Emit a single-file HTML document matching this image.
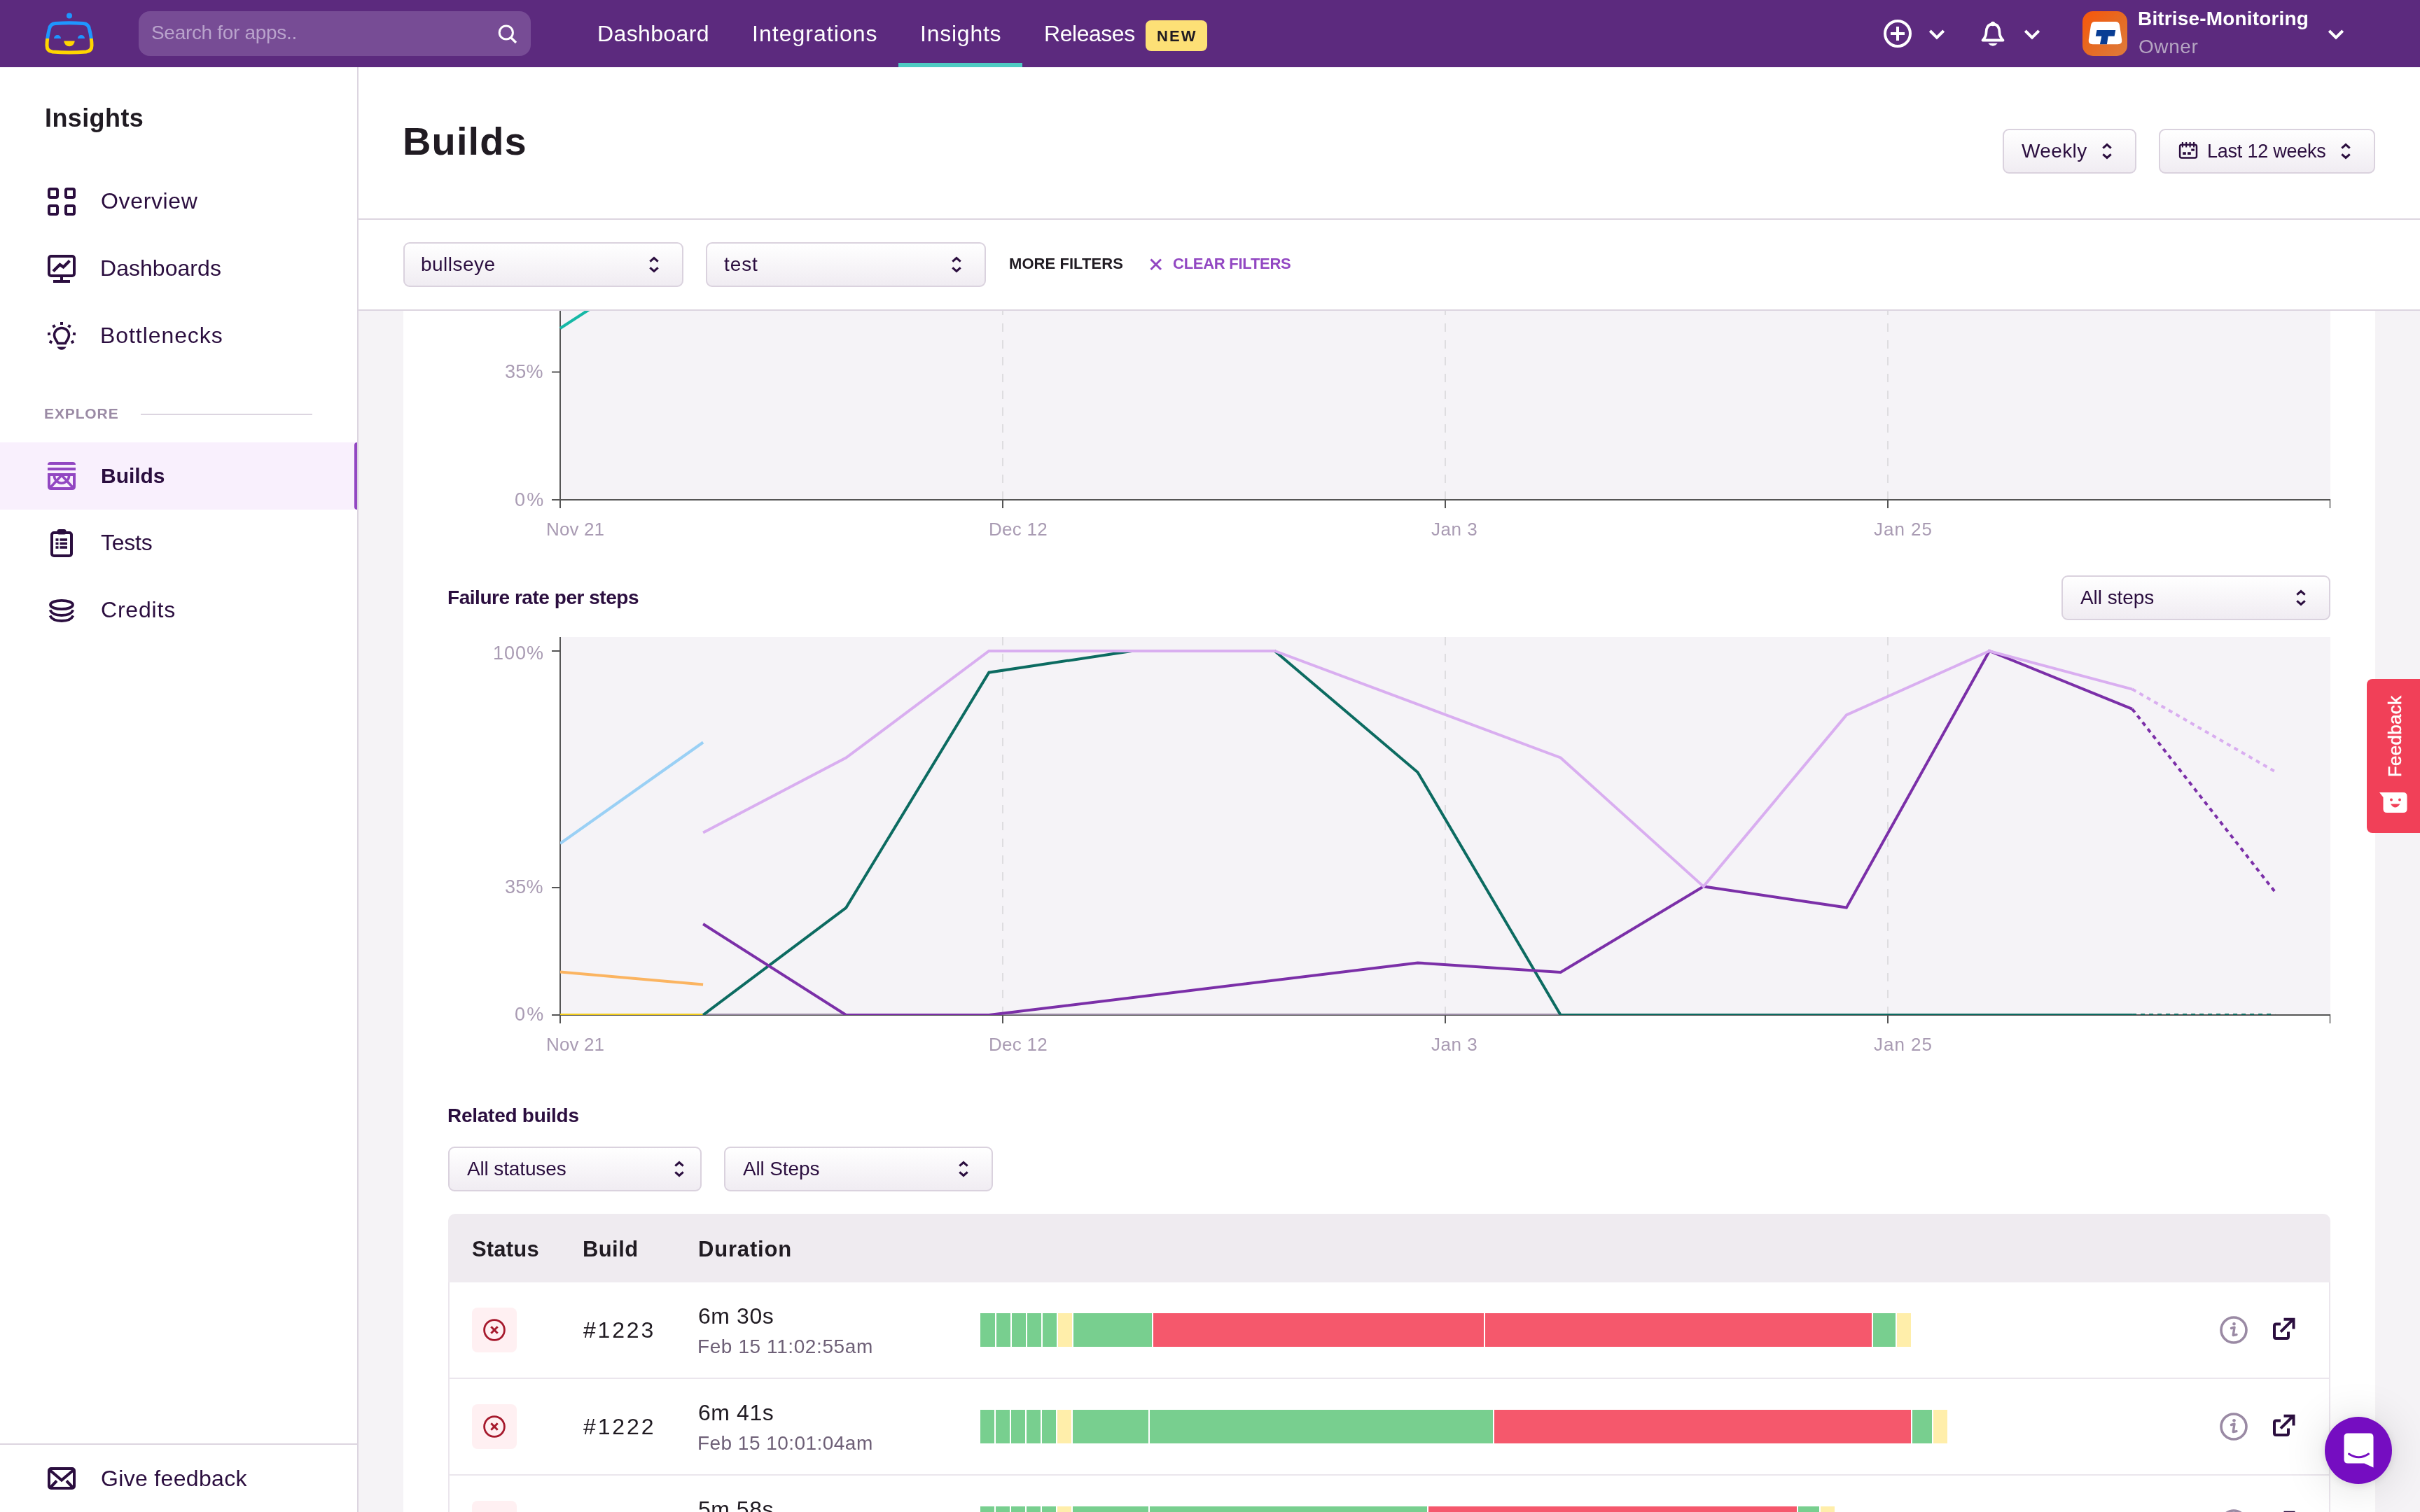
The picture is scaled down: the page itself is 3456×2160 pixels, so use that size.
<!DOCTYPE html>
<html><head><meta charset="utf-8"><title>Builds - Insights</title><style>
html,body{margin:0;padding:0;}
@media (max-width:1800px){html{zoom:.5;}}
body{width:3456px;height:2160px;overflow:hidden;position:relative;background:#f5f3f6;font-family:"Liberation Sans",sans-serif;}
.b{position:absolute;display:block;}
.t{position:absolute;display:block;white-space:nowrap;line-height:1;will-change:transform;}
</style></head><body>
<div class="b" style="left:512px;top:444px;width:2944px;height:1716px;background:#f5f3f6;"></div>
<div class="b" style="left:576px;top:444px;width:2816px;height:1716px;background:#fff;"></div>
<div class="b" style="left:800px;top:444px;width:2528px;height:270px;background:#f5f3f7;"></div>
<div class="b" style="left:800px;top:910px;width:2528px;height:540px;background:#f5f3f7;"></div>
<svg class="b" style="left:576px;top:300px;" width="2816" height="1220" viewBox="0 0 2816 1220" ><line x1="856.0" y1="414.0" x2="856.0" y2="144.0" stroke="#dedde0" stroke-width="2" stroke-dasharray="12 12"/><line x1="1488.0" y1="414.0" x2="1488.0" y2="144.0" stroke="#dedde0" stroke-width="2" stroke-dasharray="12 12"/><line x1="2120.0" y1="414.0" x2="2120.0" y2="144.0" stroke="#dedde0" stroke-width="2" stroke-dasharray="12 12"/><line x1="856.0" y1="1150.0" x2="856.0" y2="610.0" stroke="#dedde0" stroke-width="2" stroke-dasharray="12 12"/><line x1="1488.0" y1="1150.0" x2="1488.0" y2="610.0" stroke="#dedde0" stroke-width="2" stroke-dasharray="12 12"/><line x1="2120.0" y1="1150.0" x2="2120.0" y2="610.0" stroke="#dedde0" stroke-width="2" stroke-dasharray="12 12"/><line x1="224.0" y1="144.0" x2="224.0" y2="426.0" stroke="#555555" stroke-width="2" /><line x1="212.0" y1="414.0" x2="2752.0" y2="414.0" stroke="#555555" stroke-width="2" /><line x1="2751.5" y1="413.0" x2="2751.5" y2="426.0" stroke="#555555" stroke-width="1.4" /><line x1="856.0" y1="414.0" x2="856.0" y2="426.0" stroke="#555555" stroke-width="2" /><line x1="1488.0" y1="414.0" x2="1488.0" y2="426.0" stroke="#555555" stroke-width="2" /><line x1="2120.0" y1="414.0" x2="2120.0" y2="426.0" stroke="#555555" stroke-width="2" /><line x1="212.0" y1="231.5" x2="224.0" y2="231.5" stroke="#555555" stroke-width="2" /><line x1="212.0" y1="414.0" x2="224.0" y2="414.0" stroke="#555555" stroke-width="2" /><line x1="224.0" y1="610.0" x2="224.0" y2="1162.0" stroke="#555555" stroke-width="2" /><line x1="212.0" y1="1150.0" x2="2752.0" y2="1150.0" stroke="#555555" stroke-width="2" /><line x1="2751.5" y1="1149.0" x2="2751.5" y2="1162.0" stroke="#555555" stroke-width="1.4" /><line x1="856.0" y1="1150.0" x2="856.0" y2="1162.0" stroke="#555555" stroke-width="2" /><line x1="1488.0" y1="1150.0" x2="1488.0" y2="1162.0" stroke="#555555" stroke-width="2" /><line x1="2120.0" y1="1150.0" x2="2120.0" y2="1162.0" stroke="#555555" stroke-width="2" /><line x1="212.0" y1="630.0" x2="224.0" y2="630.0" stroke="#555555" stroke-width="2" /><line x1="212.0" y1="968.0" x2="224.0" y2="968.0" stroke="#555555" stroke-width="2" /><line x1="212.0" y1="1150.0" x2="224.0" y2="1150.0" stroke="#555555" stroke-width="2" /><polyline points="224.0,169.0 428.0,37.0" fill="none" stroke="#16b8a6" stroke-width="4" stroke-linejoin="miter" /><defs><clipPath id="cp2"><rect x="224" y="600" width="2528" height="550"/></clipPath></defs><g clip-path="url(#cp2)"><polyline points="428.1,1150.0 2469.1,1150.0" fill="none" stroke="#9b8ca6" stroke-width="4" stroke-linejoin="miter" /><polyline points="224.0,1150.0 428.1,1150.0" fill="none" stroke="#f2cc1c" stroke-width="4" stroke-linejoin="miter" /><polyline points="224.0,1088.6 428.1,1106.4" fill="none" stroke="#fbb461" stroke-width="4" stroke-linejoin="miter" /><polyline points="224.0,905.0 428.1,760.5" fill="none" stroke="#9ad0f5" stroke-width="4" stroke-linejoin="miter" /><polyline points="428.1,1150.0 632.2,996.8 836.3,660.7 1040.4,630.0 1244.5,630.0 1448.6,803.2 1652.7,1150.0 2469.1,1150.0" fill="none" stroke="#0c6b61" stroke-width="4" stroke-linejoin="miter" /><polyline points="2469.1,1150.0 2673.2,1150.0" fill="none" stroke="#0c6b61" stroke-width="4" stroke-linejoin="miter" stroke-dasharray="6 6"/><polyline points="428.1,1020.0 632.2,1150.0 836.3,1150.0 1448.6,1075.4 1652.7,1089.0 1856.8,966.4 2060.9,996.6 2265.0,630.0 2469.1,712.9" fill="none" stroke="#7b2fa8" stroke-width="4" stroke-linejoin="miter" /><polyline points="2469.1,712.9 2672.2,973.2" fill="none" stroke="#7b2fa8" stroke-width="4" stroke-linejoin="miter" stroke-dasharray="6 6"/><polyline points="428.1,889.6 632.2,782.6 836.3,630.0 1040.4,630.0 1244.5,630.0 1448.6,706.2 1652.7,782.5 1856.8,966.4 2060.9,721.4 2265.0,630.0 2469.1,684.6" fill="none" stroke="#d9aef0" stroke-width="4" stroke-linejoin="miter" /><polyline points="2469.1,684.6 2672.2,801.8" fill="none" stroke="#d9aef0" stroke-width="4" stroke-linejoin="miter" stroke-dasharray="6 6"/></g></svg>
<span id="c1y35" class="t" style="left:721.4px;top:518.3px;font-size:27px;font-weight:400;color:#a99bb3;letter-spacing:0.27px;">35%</span>
<span id="c1y0" class="t" style="left:734.8px;top:700.6px;font-size:27px;font-weight:400;color:#a99bb3;letter-spacing:2.19px;">0%</span>
<span id="c2y100" class="t" style="left:703.9px;top:920.1px;font-size:27px;font-weight:400;color:#a99bb3;letter-spacing:0.99px;">100%</span>
<span id="c2y35" class="t" style="left:721.4px;top:1253.9px;font-size:27px;font-weight:400;color:#a99bb3;letter-spacing:0.27px;">35%</span>
<span id="c2y0" class="t" style="left:734.8px;top:1435.9px;font-size:27px;font-weight:400;color:#a99bb3;letter-spacing:2.19px;">0%</span>
<span id="c0x0" class="t" style="left:780.2px;top:743.0px;font-size:26px;font-weight:400;color:#a99bb3;letter-spacing:0.12px;">Nov 21</span>
<span id="c0x1" class="t" style="left:1411.9px;top:743.0px;font-size:26px;font-weight:400;color:#a99bb3;letter-spacing:0.29px;">Dec 12</span>
<span id="c0x2" class="t" style="left:2044.4px;top:743.0px;font-size:26px;font-weight:400;color:#a99bb3;letter-spacing:0.53px;">Jan 3</span>
<span id="c0x3" class="t" style="left:2675.9px;top:743.0px;font-size:26px;font-weight:400;color:#a99bb3;letter-spacing:0.96px;">Jan 25</span>
<span id="c1x0" class="t" style="left:780.2px;top:1479.3px;font-size:26px;font-weight:400;color:#a99bb3;letter-spacing:0.12px;">Nov 21</span>
<span id="c1x1" class="t" style="left:1411.9px;top:1479.3px;font-size:26px;font-weight:400;color:#a99bb3;letter-spacing:0.29px;">Dec 12</span>
<span id="c1x2" class="t" style="left:2044.4px;top:1479.3px;font-size:26px;font-weight:400;color:#a99bb3;letter-spacing:0.53px;">Jan 3</span>
<span id="c1x3" class="t" style="left:2675.9px;top:1479.3px;font-size:26px;font-weight:400;color:#a99bb3;letter-spacing:0.96px;">Jan 25</span>
<span id="frps" class="t" style="left:639.1px;top:839.5px;font-size:28px;font-weight:700;color:#2b0e3f;letter-spacing:-0.46px;">Failure rate per steps</span>
<div class="b" style="left:2944px;top:822px;width:380px;height:60px;border:2px solid #dad2de;border-radius:9px;background:linear-gradient(#ffffff,#f0ecf2);"></div><span id="allsteps" class="t" style="left:2970.5px;top:840.1px;font-size:28px;font-weight:400;color:#2b0e3f;letter-spacing:-0.06px;">All steps</span><svg class="b" style="left:3274px;top:838.0px;" width="24" height="32" viewBox="0 0 24 32" ><path d="M6.3 11.6 L12 6.6 L17.700 11.6 M6.3 20.4 L12 25.4 L17.700 20.4" fill="none" stroke="#2b0e3f" stroke-width="3.1" stroke-linecap="butt" stroke-linejoin="miter"/></svg>
<span id="relb" class="t" style="left:639.1px;top:1579.5px;font-size:28px;font-weight:700;color:#2b0e3f;letter-spacing:-0.26px;">Related builds</span>
<div class="b" style="left:640px;top:1638px;width:358px;height:60px;border:2px solid #dad2de;border-radius:9px;background:linear-gradient(#ffffff,#f0ecf2);"></div><span id="allstat" class="t" style="left:666.6px;top:1656.1px;font-size:28px;font-weight:400;color:#2b0e3f;letter-spacing:-0.14px;">All statuses</span><svg class="b" style="left:958px;top:1654.0px;" width="24" height="32" viewBox="0 0 24 32" ><path d="M6.3 11.6 L12 6.6 L17.700 11.6 M6.3 20.4 L12 25.4 L17.700 20.4" fill="none" stroke="#2b0e3f" stroke-width="3.1" stroke-linecap="butt" stroke-linejoin="miter"/></svg>
<div class="b" style="left:1034px;top:1638px;width:380px;height:60px;border:2px solid #dad2de;border-radius:9px;background:linear-gradient(#ffffff,#f0ecf2);"></div><span id="allSteps2" class="t" style="left:1060.5px;top:1656.1px;font-size:28px;font-weight:400;color:#2b0e3f;letter-spacing:-0.14px;">All Steps</span><svg class="b" style="left:1364px;top:1654.0px;" width="24" height="32" viewBox="0 0 24 32" ><path d="M6.3 11.6 L12 6.6 L17.700 11.6 M6.3 20.4 L12 25.4 L17.700 20.4" fill="none" stroke="#2b0e3f" stroke-width="3.1" stroke-linecap="butt" stroke-linejoin="miter"/></svg>
<div class="b" style="left:640px;top:1734px;width:2688px;height:98px;background:#efebf0;border-radius:10px 10px 0 0;"></div>
<div class="b" style="left:640px;top:1832px;width:2px;height:328px;background:#ebe6ed;"></div>
<div class="b" style="left:3326px;top:1832px;width:2px;height:328px;background:#ebe6ed;"></div>
<div class="b" style="left:640px;top:1968px;width:2688px;height:2px;background:#ebe6ed;"></div>
<div class="b" style="left:640px;top:2106px;width:2688px;height:2px;background:#ebe6ed;"></div>
<span id="thS" class="t" style="left:673.5px;top:1768.8px;font-size:31px;font-weight:700;color:#201b22;letter-spacing:0.18px;">Status</span>
<span id="thB" class="t" style="left:831.9px;top:1768.8px;font-size:31px;font-weight:700;color:#201b22;letter-spacing:0.40px;">Build</span>
<span id="thD" class="t" style="left:996.6px;top:1768.8px;font-size:31px;font-weight:700;color:#201b22;letter-spacing:0.82px;">Duration</span>
<div class="b" style="left:674px;top:1868px;width:64px;height:64px;background:#fff0f2;border-radius:8px;"></div>
<svg class="b" style="left:686px;top:1880px;" width="40" height="40" viewBox="0 0 40 40" ><circle cx="20" cy="20" r="14.4" fill="none" stroke="#a61a2d" stroke-width="2.8"/><path d="M15.300 15.300 L24.700 24.700 M24.700 15.300 L15.300 24.700" stroke="#a61a2d" stroke-width="3" fill="none"/></svg>
<span id="r0n" class="t" style="left:832.9px;top:1883.9px;font-size:32px;font-weight:400;color:#201b22;letter-spacing:2.82px;">#1223</span>
<span id="r0d" class="t" style="left:997.1px;top:1864.3px;font-size:32px;font-weight:400;color:#201b22;letter-spacing:0.57px;">6m 30s</span>
<span id="r0t" class="t" style="left:996.4px;top:1909.9px;font-size:28px;font-weight:400;color:#6e6077;letter-spacing:0.59px;">Feb 15 11:02:55am</span>
<div class="b" style="left:1400px;top:1876px;width:21px;height:48px;background:#78cf8f;"></div>
<div class="b" style="left:1423px;top:1876px;width:20px;height:48px;background:#78cf8f;"></div>
<div class="b" style="left:1445px;top:1876px;width:20px;height:48px;background:#78cf8f;"></div>
<div class="b" style="left:1467px;top:1876px;width:20px;height:48px;background:#78cf8f;"></div>
<div class="b" style="left:1489px;top:1876px;width:20px;height:48px;background:#78cf8f;"></div>
<div class="b" style="left:1511px;top:1876px;width:20px;height:48px;background:#ffeeaa;"></div>
<div class="b" style="left:1533px;top:1876px;width:112px;height:48px;background:#78cf8f;"></div>
<div class="b" style="left:1647px;top:1876px;width:472px;height:48px;background:#f5586c;"></div>
<div class="b" style="left:2121px;top:1876px;width:552px;height:48px;background:#f5586c;"></div>
<div class="b" style="left:2675px;top:1876px;width:32px;height:48px;background:#78cf8f;"></div>
<div class="b" style="left:2709px;top:1876px;width:20px;height:48px;background:#ffeeaa;"></div>
<svg class="b" style="left:3170px;top:1880px;" width="40" height="40" viewBox="0 0 40 40" ><circle cx="20" cy="20" r="18" fill="none" stroke="#9a8aa4" stroke-width="3.6"/><circle cx="20.5" cy="11.3" r="2.3" fill="#9a8aa4"/><path d="M16.5 17.5 L21 16.2 L19.2 27.6 L24 26.6" fill="none" stroke="#9a8aa4" stroke-width="3.4" stroke-linejoin="round" stroke-linecap="round"/></svg>
<svg class="b" style="left:3242px;top:1878px;" width="40" height="40" viewBox="0 0 40 40" ><path d="M15 13.500 H8.5 Q6 13.500 6 16 V31.5 Q6 34 8.5 34 H23.5 Q26 34 26 31.5 V24.500" fill="none" stroke="#2b0e3f" stroke-width="4"/><path d="M15 24.700 L32.5 7.200 M19.500 6.700 H33.500 V20.500" fill="none" stroke="#2b0e3f" stroke-width="4"/></svg>
<div class="b" style="left:674px;top:2006px;width:64px;height:64px;background:#fff0f2;border-radius:8px;"></div>
<svg class="b" style="left:686px;top:2018px;" width="40" height="40" viewBox="0 0 40 40" ><circle cx="20" cy="20" r="14.4" fill="none" stroke="#a61a2d" stroke-width="2.8"/><path d="M15.300 15.300 L24.700 24.700 M24.700 15.300 L15.300 24.700" stroke="#a61a2d" stroke-width="3" fill="none"/></svg>
<span id="r1n" class="t" style="left:832.9px;top:2021.9px;font-size:32px;font-weight:400;color:#201b22;letter-spacing:2.87px;">#1222</span>
<span id="r1d" class="t" style="left:997.1px;top:2002.3px;font-size:32px;font-weight:400;color:#201b22;letter-spacing:0.57px;">6m 41s</span>
<span id="r1t" class="t" style="left:996.4px;top:2047.9px;font-size:28px;font-weight:400;color:#6e6077;letter-spacing:0.46px;">Feb 15 10:01:04am</span>
<div class="b" style="left:1400px;top:2014px;width:20px;height:48px;background:#78cf8f;"></div>
<div class="b" style="left:1422px;top:2014px;width:20px;height:48px;background:#78cf8f;"></div>
<div class="b" style="left:1444px;top:2014px;width:20px;height:48px;background:#78cf8f;"></div>
<div class="b" style="left:1466px;top:2014px;width:20px;height:48px;background:#78cf8f;"></div>
<div class="b" style="left:1488px;top:2014px;width:20px;height:48px;background:#78cf8f;"></div>
<div class="b" style="left:1510px;top:2014px;width:20px;height:48px;background:#ffeeaa;"></div>
<div class="b" style="left:1532px;top:2014px;width:108px;height:48px;background:#78cf8f;"></div>
<div class="b" style="left:1642px;top:2014px;width:490px;height:48px;background:#78cf8f;"></div>
<div class="b" style="left:2134px;top:2014px;width:595px;height:48px;background:#f5586c;"></div>
<div class="b" style="left:2731px;top:2014px;width:28px;height:48px;background:#78cf8f;"></div>
<div class="b" style="left:2761px;top:2014px;width:20px;height:48px;background:#ffeeaa;"></div>
<svg class="b" style="left:3170px;top:2018px;" width="40" height="40" viewBox="0 0 40 40" ><circle cx="20" cy="20" r="18" fill="none" stroke="#9a8aa4" stroke-width="3.6"/><circle cx="20.5" cy="11.3" r="2.3" fill="#9a8aa4"/><path d="M16.5 17.5 L21 16.2 L19.2 27.6 L24 26.6" fill="none" stroke="#9a8aa4" stroke-width="3.4" stroke-linejoin="round" stroke-linecap="round"/></svg>
<svg class="b" style="left:3242px;top:2016px;" width="40" height="40" viewBox="0 0 40 40" ><path d="M15 13.500 H8.5 Q6 13.500 6 16 V31.5 Q6 34 8.5 34 H23.5 Q26 34 26 31.5 V24.500" fill="none" stroke="#2b0e3f" stroke-width="4"/><path d="M15 24.700 L32.5 7.200 M19.500 6.700 H33.500 V20.500" fill="none" stroke="#2b0e3f" stroke-width="4"/></svg>
<div class="b" style="left:674px;top:2144px;width:64px;height:64px;background:#fff0f2;border-radius:8px;"></div>
<svg class="b" style="left:686px;top:2156px;" width="40" height="40" viewBox="0 0 40 40" ><circle cx="20" cy="20" r="14.4" fill="none" stroke="#a61a2d" stroke-width="2.8"/><path d="M15.300 15.300 L24.700 24.700 M24.700 15.300 L15.300 24.700" stroke="#a61a2d" stroke-width="3" fill="none"/></svg>
<span id="r2n" class="t" style="left:832.9px;top:2159.9px;font-size:32px;font-weight:400;color:#201b22;letter-spacing:2.85px;">#1221</span>
<span id="r2d" class="t" style="left:997.4px;top:2140.3px;font-size:32px;font-weight:400;color:#201b22;letter-spacing:0.50px;">5m 58s</span>
<span id="r2t" class="t" style="left:996.4px;top:2185.9px;font-size:28px;font-weight:400;color:#6e6077;letter-spacing:0.46px;">Feb 15 09:01:21am</span>
<div class="b" style="left:1400px;top:2152px;width:20px;height:48px;background:#78cf8f;"></div>
<div class="b" style="left:1422px;top:2152px;width:20px;height:48px;background:#78cf8f;"></div>
<div class="b" style="left:1444px;top:2152px;width:20px;height:48px;background:#78cf8f;"></div>
<div class="b" style="left:1466px;top:2152px;width:20px;height:48px;background:#78cf8f;"></div>
<div class="b" style="left:1488px;top:2152px;width:20px;height:48px;background:#78cf8f;"></div>
<div class="b" style="left:1510px;top:2152px;width:20px;height:48px;background:#ffeeaa;"></div>
<div class="b" style="left:1532px;top:2152px;width:108px;height:48px;background:#78cf8f;"></div>
<div class="b" style="left:1642px;top:2152px;width:396px;height:48px;background:#78cf8f;"></div>
<div class="b" style="left:2040px;top:2152px;width:526px;height:48px;background:#f5586c;"></div>
<div class="b" style="left:2568px;top:2152px;width:30px;height:48px;background:#78cf8f;"></div>
<div class="b" style="left:2600px;top:2152px;width:20px;height:48px;background:#ffeeaa;"></div>
<svg class="b" style="left:3170px;top:2156px;" width="40" height="40" viewBox="0 0 40 40" ><circle cx="20" cy="20" r="18" fill="none" stroke="#9a8aa4" stroke-width="3.6"/><circle cx="20.5" cy="11.3" r="2.3" fill="#9a8aa4"/><path d="M16.5 17.5 L21 16.2 L19.2 27.6 L24 26.6" fill="none" stroke="#9a8aa4" stroke-width="3.4" stroke-linejoin="round" stroke-linecap="round"/></svg>
<svg class="b" style="left:3242px;top:2154px;" width="40" height="40" viewBox="0 0 40 40" ><path d="M15 13.500 H8.5 Q6 13.500 6 16 V31.5 Q6 34 8.5 34 H23.5 Q26 34 26 31.5 V24.500" fill="none" stroke="#2b0e3f" stroke-width="4"/><path d="M15 24.700 L32.5 7.200 M19.500 6.700 H33.500 V20.500" fill="none" stroke="#2b0e3f" stroke-width="4"/></svg>
<div class="b" style="left:512px;top:96px;width:2944px;height:346px;background:#fff;"></div>
<div class="b" style="left:512px;top:312px;width:2944px;height:2px;background:#dcd5e0;"></div>
<div class="b" style="left:512px;top:442px;width:2944px;height:2px;background:#dcd5e0;"></div>
<span id="h1" class="t" style="left:574.9px;top:174.0px;font-size:56px;font-weight:700;color:#201b22;letter-spacing:1.12px;">Builds</span>
<div class="b" style="left:2860px;top:184px;width:187px;height:60px;border:2px solid #dad2de;border-radius:9px;background:linear-gradient(#ffffff,#f0ecf2);"></div>
<span id="weekly" class="t" style="left:2886.9px;top:201.8px;font-size:28px;font-weight:400;color:#2b0e3f;letter-spacing:0.38px;">Weekly</span>
<svg class="b" style="left:2997px;top:200px;" width="24" height="32" viewBox="0 0 24 32" ><path d="M6.3 11.6 L12 6.6 L17.700 11.6 M6.3 20.4 L12 25.4 L17.700 20.4" fill="none" stroke="#2b0e3f" stroke-width="3.1" stroke-linecap="butt" stroke-linejoin="miter"/></svg>
<div class="b" style="left:3083px;top:184px;width:305px;height:60px;border:2px solid #dad2de;border-radius:9px;background:linear-gradient(#ffffff,#f0ecf2);"></div>
<svg class="b" style="left:3110px;top:200px;" width="30" height="30" viewBox="0 0 30 30" ><rect x="3.1" y="6.700" width="23.900" height="18.800" rx="2.5" fill="none" stroke="#2b0e3f" stroke-width="2.5"/><path d="M6.900 2.900 V10.500 M12.200 2.900 V10.500 M17.600 2.900 V10.500 M23.100 2.900 V10.500" stroke="#2b0e3f" stroke-width="2.1"/><path d="M19.300 12.500 h4.600 v3.200 h-4.600z M7.200 17.300 h4.600 v3.600 h-4.600z M14.100 17.300 h4.700 v3.600 h-4.700z" fill="#2b0e3f"/></svg>
<span id="l12w" class="t" style="left:3152.2px;top:202.6px;font-size:27px;font-weight:400;color:#2b0e3f;letter-spacing:-0.23px;">Last 12 weeks</span>
<svg class="b" style="left:3337.5px;top:200px;" width="24" height="32" viewBox="0 0 24 32" ><path d="M6.3 11.6 L12 6.6 L17.700 11.6 M6.3 20.4 L12 25.4 L17.700 20.4" fill="none" stroke="#2b0e3f" stroke-width="3.1" stroke-linecap="butt" stroke-linejoin="miter"/></svg>
<div class="b" style="left:576px;top:346px;width:396px;height:60px;border:2px solid #dad2de;border-radius:9px;background:linear-gradient(#ffffff,#f0ecf2);"></div><span id="bull" class="t" style="left:601.1px;top:364.1px;font-size:28px;font-weight:400;color:#2b0e3f;letter-spacing:0.49px;">bullseye</span><svg class="b" style="left:922px;top:362.0px;" width="24" height="32" viewBox="0 0 24 32" ><path d="M6.3 11.6 L12 6.6 L17.700 11.6 M6.3 20.4 L12 25.4 L17.700 20.4" fill="none" stroke="#2b0e3f" stroke-width="3.1" stroke-linecap="butt" stroke-linejoin="miter"/></svg>
<div class="b" style="left:1008px;top:346px;width:396px;height:60px;border:2px solid #dad2de;border-radius:9px;background:linear-gradient(#ffffff,#f0ecf2);"></div><span id="test" class="t" style="left:1034.3px;top:364.1px;font-size:28px;font-weight:400;color:#2b0e3f;letter-spacing:0.90px;">test</span><svg class="b" style="left:1354px;top:362.0px;" width="24" height="32" viewBox="0 0 24 32" ><path d="M6.3 11.6 L12 6.6 L17.700 11.6 M6.3 20.4 L12 25.4 L17.700 20.4" fill="none" stroke="#2b0e3f" stroke-width="3.1" stroke-linecap="butt" stroke-linejoin="miter"/></svg>
<span id="moref" class="t" style="left:1440.5px;top:366.4px;font-size:22px;font-weight:700;color:#201b22;letter-spacing:0.06px;">MORE FILTERS</span>
<svg class="b" style="left:1640px;top:367px;" width="22" height="22" viewBox="0 0 22 22" ><path d="M3.5 3.5 L18 18 M18 3.5 L3.5 18" stroke="#9247c2" stroke-width="3" fill="none"/></svg>
<span id="clearf" class="t" style="left:1674.8px;top:366.4px;font-size:22px;font-weight:700;color:#9247c2;letter-spacing:-0.26px;">CLEAR FILTERS</span>
<div class="b" style="left:0px;top:96px;width:510px;height:2064px;background:#fff;"></div>
<div class="b" style="left:510px;top:96px;width:2px;height:2064px;background:#dcd5e0;"></div>
<span id="sbh" class="t" style="left:64.1px;top:150.5px;font-size:36px;font-weight:700;color:#201b22;letter-spacing:0.40px;">Insights</span>
<svg class="b" style="left:68px;top:268px;" width="40" height="40" viewBox="0 0 40 40" ><rect x="2" y="2" width="12" height="12" rx="2" fill="none" stroke="#2b0e3f" stroke-width="4"/><rect x="2" y="26" width="12" height="12" rx="2" fill="none" stroke="#2b0e3f" stroke-width="4"/><rect x="26" y="2" width="12" height="12" rx="2" fill="none" stroke="#2b0e3f" stroke-width="4"/><rect x="26" y="26" width="12" height="12" rx="2" fill="none" stroke="#2b0e3f" stroke-width="4"/></svg>
<span id="sb1" class="t" style="left:143.7px;top:271.4px;font-size:32px;font-weight:400;color:#2b0e3f;letter-spacing:0.65px;">Overview</span>
<svg class="b" style="left:68px;top:364px;" width="40" height="40" viewBox="0 0 40 40" ><rect x="2" y="2" width="36" height="28" rx="3" fill="none" stroke="#2b0e3f" stroke-width="4"/><path d="M20 30 V37 M8 38 H32" stroke="#2b0e3f" stroke-width="4" fill="none"/><path d="M8 23.500 L17.5 14 L22.5 17.5 L31.500 8.500" stroke="#2b0e3f" stroke-width="4.2" fill="none"/></svg>
<span id="sb2" class="t" style="left:143.2px;top:367.4px;font-size:32px;font-weight:400;color:#2b0e3f;letter-spacing:0.04px;">Dashboards</span>
<svg class="b" style="left:68px;top:460px;" width="40" height="40" viewBox="0 0 40 40" ><path d="M14.5 30.5 C14 27 9.5 25 9.5 19 A10.5 10.5 0 0 1 30.500 19 C30.5 25 26 27 25.5 30.5 Z" fill="none" stroke="#2b0e3f" stroke-width="3.6" stroke-linejoin="round"/><path d="M13.5 35.5 H26.5 Q24 39.8 20 39.8 Q16 39.8 13.5 35.5Z" fill="#2b0e3f"/><g fill="#2b0e3f"><rect x="18" y="0" width="4" height="4"/><rect x="7" y="4" width="4" height="4" transform="rotate(-30 9 6)"/><rect x="29" y="4" width="4" height="4" transform="rotate(30 31 6)"/><rect x="0" y="15" width="4" height="4" transform="rotate(-10 2 17)"/><rect x="36" y="15" width="4" height="4" transform="rotate(10 38 17)"/><rect x="2.5" y="26.5" width="4" height="4" transform="rotate(25 4.5 28.5)"/><rect x="33.5" y="26.5" width="4" height="4" transform="rotate(-25 35.5 28.5)"/></g></svg>
<span id="sb3" class="t" style="left:143.4px;top:463.4px;font-size:32px;font-weight:400;color:#2b0e3f;letter-spacing:0.93px;">Bottlenecks</span>
<span id="expl" class="t" style="left:63.2px;top:580.4px;font-size:21px;font-weight:700;color:#9b8ba5;letter-spacing:0.88px;">EXPLORE</span>
<div class="b" style="left:201px;top:591px;width:245px;height:2px;background:#dcd5e0;"></div>
<div class="b" style="left:0px;top:632px;width:510px;height:96px;background:#f9f0fd;"></div>
<div class="b" style="left:506px;top:632px;width:4px;height:96px;background:#9247c2;border-radius:4px 0 0 4px;"></div>
<svg class="b" style="left:68px;top:660px;" width="40" height="40" viewBox="0 0 40 40" ><path d="M0 4 Q0 0 4 0 H36 Q40 0 40 4 Z" fill="#9247c2"/><rect x="0" y="8" width="40" height="4" fill="#9247c2"/><path d="M2 18 H38 V35 Q38 38 35 38 H5 Q2 38 2 35 Z" fill="none" stroke="#9247c2" stroke-width="4"/><path d="M2.500 38 L20.800 18 M37.500 38 L19.200 18" stroke="#9247c2" stroke-width="3.6" fill="none"/><path d="M9.400 19.600 A10.600 10.600 0 0 0 30.600 19.600" stroke="#9247c2" stroke-width="3.6" fill="none"/></svg>
<span id="sb4" class="t" style="left:144.2px;top:665.1px;font-size:30px;font-weight:700;color:#2b0e3f;letter-spacing:-0.03px;">Builds</span>
<svg class="b" style="left:68px;top:756px;" width="40" height="40" viewBox="0 0 40 40" ><rect x="6" y="5" width="28" height="33" rx="3" fill="none" stroke="#2b0e3f" stroke-width="4"/><rect x="13.5" y="0" width="13" height="7.5" rx="3" fill="#2b0e3f"/><g fill="#2b0e3f"><rect x="11.5" y="13.2" width="4" height="3.6"/><rect x="17.500" y="13.2" width="10.5" height="3.6"/><rect x="11.5" y="18.700" width="4" height="3.6"/><rect x="17.500" y="18.700" width="10.5" height="3.6"/><rect x="11.5" y="24.2" width="4" height="3.6"/><rect x="17.500" y="24.2" width="10.5" height="3.6"/></g></svg>
<span id="sb5" class="t" style="left:144.1px;top:759.4px;font-size:32px;font-weight:400;color:#2b0e3f;letter-spacing:-0.23px;">Tests</span>
<svg class="b" style="left:68px;top:852px;" width="40" height="40" viewBox="0 0 40 40" ><ellipse cx="20" cy="12" rx="16" ry="6.2" fill="none" stroke="#2b0e3f" stroke-width="3.8"/><path d="M3.5 19.5 Q7 27 20 27 Q33 27 36.500 19.500" fill="none" stroke="#2b0e3f" stroke-width="3.8"/><path d="M3.5 27.5 Q7 35 20 35 Q33 35 36.500 27.500" fill="none" stroke="#2b0e3f" stroke-width="3.8"/></svg>
<span id="sb6" class="t" style="left:144.0px;top:855.4px;font-size:32px;font-weight:400;color:#2b0e3f;letter-spacing:0.80px;">Credits</span>
<div class="b" style="left:0px;top:2062px;width:510px;height:2px;background:#dcd5e0;"></div>
<svg class="b" style="left:68px;top:2096px;" width="40" height="32" viewBox="0 0 40 32" ><rect x="2" y="2" width="36" height="28" rx="3" fill="none" stroke="#2b0e3f" stroke-width="4"/><path d="M3 4 L20 18.5 L37 4" fill="none" stroke="#2b0e3f" stroke-width="4"/><path d="M4 29 L13 19.500 M36 29 L27 19.500" fill="none" stroke="#2b0e3f" stroke-width="4"/></svg>
<span id="sb7" class="t" style="left:144.2px;top:2095.9px;font-size:32px;font-weight:400;color:#2b0e3f;letter-spacing:0.33px;">Give feedback</span>
<div class="b" style="left:0px;top:0px;width:3456px;height:96px;background:#5c2a7e;"></div>
<svg class="b" style="left:60px;top:14px;" width="80" height="70" viewBox="0 0 80 70" ><defs><linearGradient id="lg" x1="0" y1="0" x2="0" y2="1" gradientUnits="objectBoundingBox"><stop offset="0.535" stop-color="#1e96ff"/><stop offset="0.535" stop-color="#ffd500"/></linearGradient></defs><circle cx="39" cy="8.500" r="4" fill="#1e96ff"/><path d="M19 19.500 Q39 18 59 19.500 Q66 20 67.500 27 Q71 41 71 51 Q71 59 63 60 Q39 62 15 60 Q7 59 7 51 Q7 41 10.5 27 Q12 20 19 19.500Z" fill="none" stroke="url(#lg)" stroke-width="5"/><path d="M17 41 A5 5 0 0 1 27 41Z" fill="#1e96ff"/><path d="M51 41 A5 5 0 0 1 61 41Z" fill="#1e96ff"/><path d="M31.300 44.500 A7.700 7.700 0 0 0 46.700 44.500Z" fill="#ffd500"/></svg>
<div class="b" style="left:198px;top:16px;width:560px;height:64px;background:#774c95;border-radius:16px;"></div>
<span id="srch" class="t" style="left:215.7px;top:33.3px;font-size:28px;font-weight:400;color:#b9a3cc;letter-spacing:-0.31px;">Search for apps..</span>
<svg class="b" style="left:706px;top:30px;" width="36" height="36" viewBox="0 0 36 36" ><circle cx="16.8" cy="16.500" r="9.6" fill="none" stroke="#fff" stroke-width="3"/><path d="M23.500 23.500 L31 31" stroke="#fff" stroke-width="3.2" fill="none"/></svg>
<span id="nav1" class="t" style="left:853.4px;top:32.4px;font-size:32px;font-weight:400;color:#fff;letter-spacing:0.37px;">Dashboard</span>
<span id="nav2" class="t" style="left:1074.0px;top:32.4px;font-size:32px;font-weight:400;color:#fff;letter-spacing:1.03px;">Integrations</span>
<span id="nav3" class="t" style="left:1313.5px;top:32.4px;font-size:32px;font-weight:400;color:#fff;letter-spacing:0.76px;">Insights</span>
<span id="nav4" class="t" style="left:1491.0px;top:32.4px;font-size:32px;font-weight:400;color:#fff;letter-spacing:-0.46px;">Releases</span>
<div class="b" style="left:1283px;top:90px;width:177px;height:6px;background:#4ecbc2;"></div>
<div class="b" style="left:1636px;top:29px;width:88px;height:44px;background:#fde076;border-radius:8px;"></div>
<span id="new" class="t" style="left:1652.0px;top:41.2px;font-size:22px;font-weight:700;color:#201b22;letter-spacing:2.13px;">NEW</span>
<svg class="b" style="left:2686px;top:24px;" width="48" height="48" viewBox="0 0 48 48" ><circle cx="24" cy="24" r="18" fill="none" stroke="#fff" stroke-width="4"/><path d="M24 14 V34 M14 24 H34" stroke="#fff" stroke-width="4" fill="none"/></svg>
<svg class="b" style="left:2752px;top:39px;" width="28" height="20" viewBox="0 0 28 20" ><path d="M4.300 5 L14 14.700 L23.700 5" fill="none" stroke="#fff" stroke-width="4"/></svg>
<svg class="b" style="left:2888px;top:39px;" width="28" height="20" viewBox="0 0 28 20" ><path d="M4.300 5 L14 14.700 L23.700 5" fill="none" stroke="#fff" stroke-width="4"/></svg>
<svg class="b" style="left:3322px;top:39px;" width="28" height="20" viewBox="0 0 28 20" ><path d="M4.300 5 L14 14.700 L23.700 5" fill="none" stroke="#fff" stroke-width="4"/></svg>
<svg class="b" style="left:2826px;top:28px;" width="40" height="40" viewBox="0 0 40 40" ><path d="M20 6.500 C12.5 6.500 10.5 12.5 10.5 18 C10.5 24 8 27 5.500 29.500 H34.500 C32 27 29.500 24 29.500 18 C29.500 12.5 27.500 6.500 20 6.500Z" fill="none" stroke="#fff" stroke-width="3.8" stroke-linejoin="round"/><circle cx="20" cy="6" r="3.2" fill="#fff"/><path d="M13.300 33.800 Q20 41.500 26.700 33.800Z" fill="#fff"/></svg>
<div class="b" style="left:2974px;top:16px;width:64px;height:64px;background:linear-gradient(135deg,#f8560b 0%,#e66a22 50%,#de7c3c 100%);border-radius:15px;"></div>
<svg class="b" style="left:2974px;top:16px;" width="64" height="64" viewBox="0 0 64 64" ><path d="M17.500 15 H47.500 Q52 15 53 20 L56.200 41 Q56.800 47.200 50.500 47.200 H14.500 Q8.200 47.200 8.800 41 L12 20 Q13 15 17.500 15Z" fill="#fff"/><path d="M20.500 27.100 H47.200 L45.600 35.800 H36.700 L34.900 47.200 H24.900 L27.300 35.800 H18.800Z" fill="#083d94"/></svg>
<span id="org" class="t" style="left:3053.1px;top:13.4px;font-size:28px;font-weight:700;color:#fff;letter-spacing:0.16px;">Bitrise-Monitoring</span>
<span id="own" class="t" style="left:3053.7px;top:53.1px;font-size:28px;font-weight:400;color:#b5a5c2;letter-spacing:0.58px;">Owner</span>
<div class="b" style="left:3380px;top:970px;width:76px;height:220px;background:#f14058;border-radius:8px 0 0 8px;"></div>
<span id="fbk" class="t" style="left:3380px;top:993px;width:76px;height:114px;font-size:26px;color:#fff;"><span style="position:absolute;left:50%;top:50%;transform:translate(-50%,-50%) rotate(-90deg);white-space:nowrap;line-height:1;letter-spacing:0.3px;margin-left:2px;margin-top:1.5px;-webkit-text-stroke:0.5px #fff">Feedback</span></span>
<svg class="b" style="left:3396px;top:1130px;" width="44" height="34" viewBox="0 0 44 34" ><path d="M2 2 H36 Q41.500 2 41.500 7.500 V26 Q41.500 31 36 31 H13 Q7.500 31 7.500 26 V9 Z" fill="#fff"/><circle cx="19" cy="12.500" r="2" fill="#f14058"/><circle cx="31" cy="12.500" r="2" fill="#f14058"/><path d="M18 18.500 Q24.500 28.500 31.500 18.500Z" fill="#f14058"/></svg>
<div class="b" style="left:3320px;top:2024px;width:96px;height:96px;background:#750dc1;border-radius:50%;box-shadow:0 2px 12px rgba(0,0,0,.10),0 4px 64px rgba(0,0,0,.14);"></div>
<svg class="b" style="left:3344px;top:2044px;" width="50" height="56" viewBox="0 0 50 56" ><path d="M9 3.500 H40 Q45.500 3.500 45.500 9 V52.500 L32.500 46.500 H9 Q3.500 46.500 3.500 41 V9 Q3.500 3.500 9 3.500Z" fill="#fff"/><path d="M10.500 33 Q24.500 42.500 38.500 33" fill="none" stroke="#750dc1" stroke-width="3" stroke-linecap="round"/></svg>
</body></html>
